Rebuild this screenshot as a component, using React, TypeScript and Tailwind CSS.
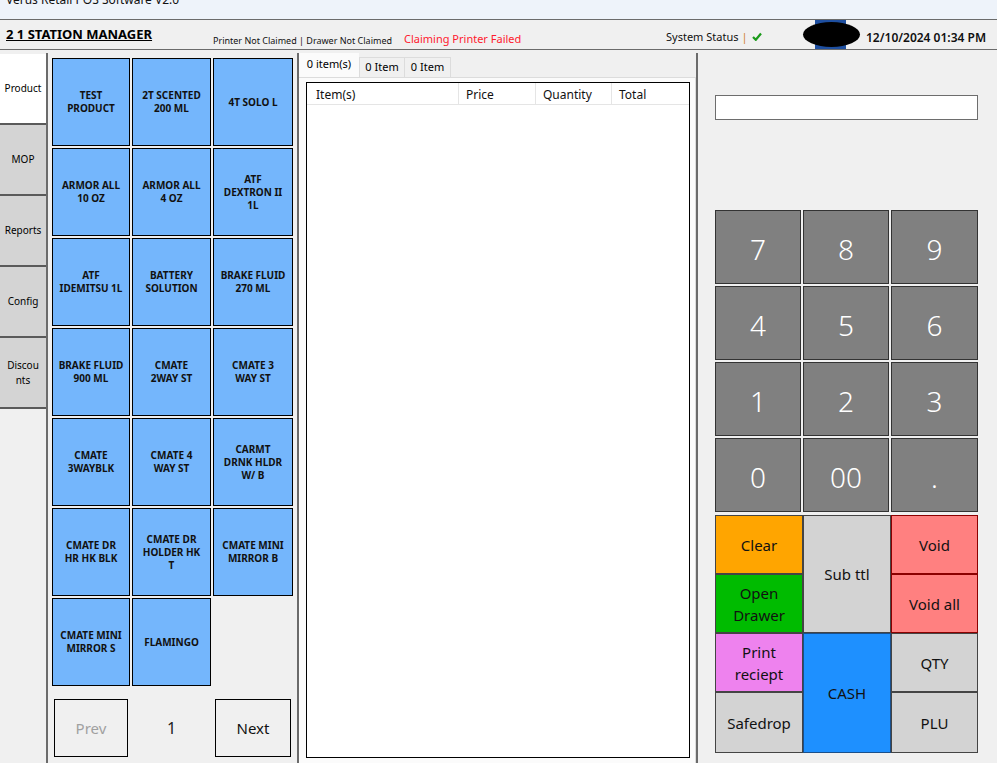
import React from "react";

const font = { fontFamily: '"Noto Sans", "Open Sans", Arial, sans-serif' };

const products = [
  "TEST\nPRODUCT",
  "2T SCENTED\n200 ML",
  "4T SOLO L",
  "ARMOR ALL\n10 OZ",
  "ARMOR ALL\n4 OZ",
  "ATF\nDEXTRON II\n1L",
  "ATF\nIDEMITSU 1L",
  "BATTERY\nSOLUTION",
  "BRAKE FLUID\n270 ML",
  "BRAKE FLUID\n900 ML",
  "CMATE\n2WAY ST",
  "CMATE 3\nWAY ST",
  "CMATE\n3WAYBLK",
  "CMATE 4\nWAY ST",
  "CARMT\nDRNK HLDR\nW/ B",
  "CMATE DR\nHR HK BLK",
  "CMATE DR\nHOLDER HK\nT",
  "CMATE MINI\nMIRROR B",
  "CMATE MINI\nMIRROR S",
  "FLAMINGO",
];

const tabs = ["Product", "MOP", "Reports", "Config", "Discou\nnts"];

const keys = ["7", "8", "9", "4", "5", "6", "1", "2", "3", "0", "00", "."];

function SideTabs() {
  return (
    <div className="flex w-[48px] flex-col border-r-2 border-[#6b6b6b] pt-px">
      {tabs.map((t, i) => (
        <div
          key={t}
          className={`flex h-[71px] items-center justify-center border-b-2 border-[#5a5a5a] text-center text-[10px] leading-[15px] text-black whitespace-pre ${
            i === 0 ? "bg-white" : "bg-[#d4d4d4]"
          }`}
        >
          {t}
        </div>
      ))}
    </div>
  );
}

function ProductPanel() {
  return (
    <div className="flex w-[251px] flex-col border-r-2 border-[#6b6b6b] pl-[4px] pt-[5px]">
      <div className="grid grid-cols-[78px_79px_80px] auto-rows-[88px] gap-x-[2px] gap-y-[2px]">
        {products.map((p) => (
          <div
            key={p}
            className="flex items-center justify-center whitespace-pre border border-black bg-[#74b6fc] text-center text-[10px] font-bold leading-[13px] text-[#111]"
          >
            {p}
          </div>
        ))}
      </div>
      <div className="mt-[13px] flex items-center">
        <div className="ml-[2px] flex h-[58px] w-[74px] items-center justify-center border border-black text-[15px] text-[#a0a0a0]">
          Prev
        </div>
        <div className="flex w-[87px] justify-center text-[16px] text-[#222]">1</div>
        <div className="flex h-[58px] w-[76px] items-center justify-center border border-black text-[15px] text-[#111]">
          Next
        </div>
      </div>
    </div>
  );
}

function CenterPanel() {
  return (
    <div className="flex w-[399px] flex-col border-r-2 border-[#6b6b6b]">
      <div className="flex h-[24px] items-end">
        <div className="flex h-[24px] w-[60px] items-start justify-center bg-[#fbfbfb] pt-[3px] text-[11px] text-black">
          0 item(s)
        </div>
        <div className="flex h-[20px] w-[46px] items-center justify-center border border-b-0 border-[#dcdcdc] text-[11px] text-black">
          0 Item
        </div>
        <div className="flex h-[20px] w-[46px] items-center justify-center border border-b-0 border-l-0 border-[#dcdcdc] text-[11px] text-black">
          0 Item
        </div>
      </div>
      <div className="flex flex-1 flex-col border border-r-[#dcdcdc] border-l-0 border-t-[#dcdcdc] border-b-0 bg-[#fbfbfb] pb-[5px] pl-[7px] pr-[5px] pt-[4px]">
        <div className="flex flex-1 flex-col border border-black bg-white">
          <div className="flex h-[22px] border-b border-[#e5e5e5] text-[12px] text-[#111]">
            <div className="w-[152px] border-r border-[#e5e5e5] pl-[9px] pt-[3px]">Item(s)</div>
            <div className="w-[77px] border-r border-[#e5e5e5] pl-[7px] pt-[3px]">Price</div>
            <div className="w-[76px] border-r border-[#e5e5e5] pl-[7px] pt-[3px]">Quantity</div>
            <div className="flex-1 pl-[7px] pt-[3px]">Total</div>
          </div>
        </div>
      </div>
    </div>
  );
}

function Btn({ label, cls }: { label: string; cls: string }) {
  return (
    <div className={`flex items-center justify-center border text-center text-[15px] leading-[22px] text-[#111] ${cls}`}>
      {label}
    </div>
  );
}

function RightPanel() {
  return (
    <div className="flex flex-1 flex-col pl-[17px] pt-[42px]">
      <div className="h-[25px] w-[263px] border border-[#6d6d6d] bg-white" />
      <div className="mt-[90px] grid grid-cols-[86px_86px_87px] auto-rows-[74px] gap-x-[2px] gap-y-[2px]">
        {keys.map((k) => (
          <div
            key={k}
            className="flex items-center justify-center border border-[#333] bg-[#808080] pt-[4px] text-[28px] font-light text-white"
          >
            {k}
          </div>
        ))}
      </div>
      <div className="mt-[3px] grid w-[263px] grid-cols-[88px_88px_87px] grid-rows-[59px_59px_59px_61px]">
        <Btn label="Clear" cls="border-[#444] bg-[#ffa500]" />
        <Btn label="Sub ttl" cls="row-span-2 border-[#444] bg-[#d3d3d3]" />
        <Btn label="Void" cls="border-[#8b0000] bg-[#ff8080]" />
        <Btn label={"Open\nDrawer"} cls="whitespace-pre border-[#444] bg-[#00bb00]" />
        <Btn label="Void all" cls="border-[#8b0000] bg-[#ff8080]" />
        <Btn label={"Print\nreciept"} cls="whitespace-pre border-[#444] bg-[#ee82ee]" />
        <Btn label="CASH" cls="row-span-2 border-[#1a4f8a] bg-[#1e90ff]" />
        <Btn label="QTY" cls="border-[#444] bg-[#d3d3d3]" />
        <Btn label="Safedrop" cls="border-[#444] bg-[#d3d3d3]" />
        <Btn label="PLU" cls="border-[#444] bg-[#d3d3d3]" />
      </div>
    </div>
  );
}

export default function App() {
  return (
    <div className="flex h-[763px] w-[997px] flex-col overflow-hidden bg-[#f0f0f0]" style={font}>
      <div className="h-[20px] overflow-hidden border-b border-[#6b6b6b] bg-[#eef3fa] pl-[6px]">
        <div className="-mt-[9px] text-[12px] text-[#111]">Verus Retail POS Software V2.0</div>
      </div>
      <div className="flex h-[30px] items-end border-b border-[#6b6b6b] pb-[2px]">
        <div className="w-[213px] self-center pl-[6px] pt-[2px] text-[13px] font-bold text-black underline">
          2 1 STATION MANAGER
        </div>
        <div className="w-[191px] text-[9px] text-[#111]">Printer Not Claimed | Drawer Not Claimed</div>
        <div className="w-[262px] text-[11px] text-[#ff1a2e]">Claiming Printer Failed</div>
        <div className="flex w-[137px] items-center pb-[2px] text-[11px] text-[#111]">
          System Status <span className="ml-[3px] text-[#d08030]">|</span>
          <svg className="ml-[4px]" width="10" height="9" viewBox="0 0 10 9">
            <path d="M1 5 L3.8 7.8 L9 1.5" stroke="#1a9a1a" strokeWidth="2.2" fill="none" />
          </svg>
        </div>
        <div className="relative h-[28px] w-[63px] self-start">
          <div className="absolute left-[12px] top-0 h-[29px] w-[31px] bg-[#1e4fa0]" />
          <div className="absolute left-0 top-[2px] h-[25px] w-[57px] rounded-[50%] bg-black" />
        </div>
        <div className="text-[12px] font-semibold text-[#111]">12/10/2024 01:34 PM</div>
      </div>
      <div className="mt-[3px] flex flex-1">
        <SideTabs />
        <ProductPanel />
        <CenterPanel />
        <RightPanel />
      </div>
    </div>
  );
}
